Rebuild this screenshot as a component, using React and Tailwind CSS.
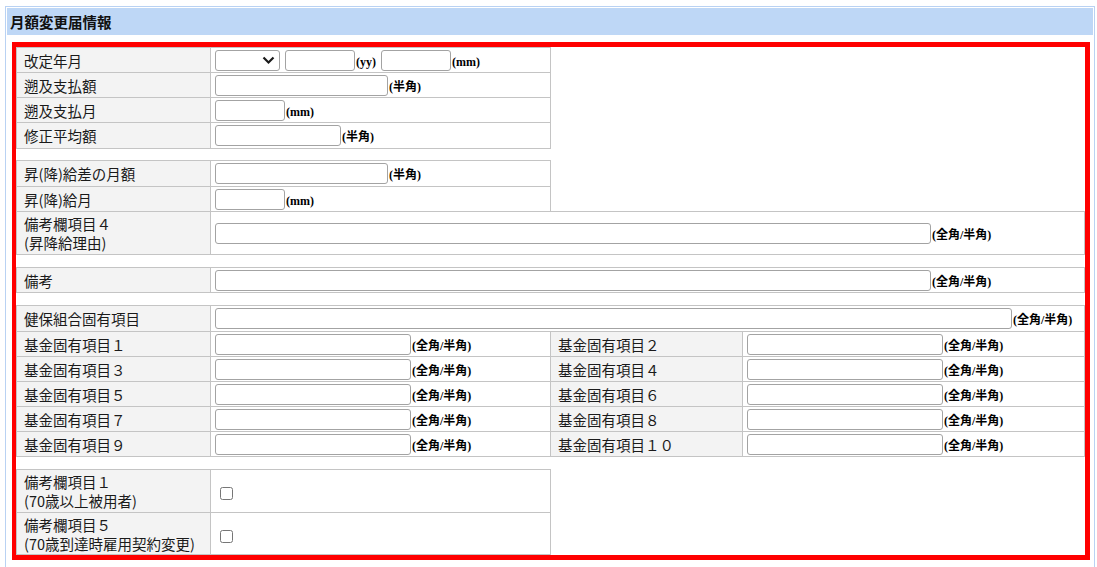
import React from 'react';

const lbl = "bg-[#f3f3f3] border border-[#c4c4c4] pl-[7px] pr-1 text-[14.5px] leading-[19px] text-[#1a1a1a] align-middle";
const val = "border border-[#c4c4c4] pl-[4px] align-middle";
const hintFont = "font-bold text-[12px] text-black font-['Liberation_Serif','Noto_Sans_CJK_JP',serif] mt-[3px] ml-px";

function Box({ w }) {
    return <input type="text" className={`h-[21px] ${w} border border-[#a3a3a3] rounded-[3px] bg-white shrink-0`} />;
}

function Field({ w, hint }) {
    return (
        <div className="flex items-center">
            <Box w={w} />
            {hint && <span className={hintFont}>{hint}</span>}
        </div>
    );
}

function Cols() {
    return (
        <colgroup>
            <col className="w-[194px]" />
            <col className="w-[340px]" />
            <col className="w-[192px]" />
            <col />
        </colgroup>
    );
}

export default function App() {
    const kikin = [
        ['基金固有項目１', '基金固有項目２'],
        ['基金固有項目３', '基金固有項目４'],
        ['基金固有項目５', '基金固有項目６'],
        ['基金固有項目７', '基金固有項目８'],
        ['基金固有項目９', '基金固有項目１０'],
    ];

    return (
        <div className="min-h-screen bg-white pt-[6px] pl-[5px] pr-[2px] font-['Noto_Sans_CJK_JP',sans-serif]">
            <div className="border border-b-0 border-[#b9d2f3] p-px pb-[10px] min-h-[561px]">
                <div className="h-[27px] bg-[#bed7f6] flex items-center pl-[3px]">
                    <h2 className="text-[14.5px] font-bold text-[#111]">月額変更届情報</h2>
                </div>

                <div className="mt-[7px] ml-[5px] w-[1078px] border-[5px] border-l-4 border-[#ff0000]">
                    <table className="w-full table-fixed">
                        <Cols />
                        <tbody>
                            <tr className="h-[25px]">
                                <td className={lbl}>改定年月</td>
                                <td className={val}>
                                    <div className="flex items-center">
                                        <div className="relative w-[65px] h-[21px] shrink-0">
                                            <select className="appearance-none w-full h-full border border-[#a3a3a3] rounded-[3px] bg-white">
                                                <option></option>
                                            </select>
                                            <svg className="absolute right-[5px] top-[6px] pointer-events-none" width="13" height="9" viewBox="0 0 13 9">
                                                <path d="M1.5 1.5 L6.5 6.5 L11.5 1.5" fill="none" stroke="#1a1a1a" strokeWidth="2.2" />
                                            </svg>
                                        </div>
                                        <div className="ml-[5px] flex items-center">
                                            <Box w="w-[70px]" />
                                            <span className={hintFont}>(yy)</span>
                                        </div>
                                        <div className="ml-[5px] flex items-center">
                                            <Box w="w-[70px]" />
                                            <span className={hintFont}>(mm)</span>
                                        </div>
                                    </div>
                                </td>
                            </tr>
                            <tr className="h-[25px]">
                                <td className={lbl}>遡及支払額</td>
                                <td className={val}><Field w="w-[173px]" hint="(半角)" /></td>
                            </tr>
                            <tr className="h-[25px]">
                                <td className={lbl}>遡及支払月</td>
                                <td className={val}><Field w="w-[70px]" hint="(mm)" /></td>
                            </tr>
                            <tr className="h-[26px]">
                                <td className={lbl}>修正平均額</td>
                                <td className={val}><Field w="w-[126px]" hint="(半角)" /></td>
                            </tr>
                        </tbody>
                    </table>

                    <table className="w-full table-fixed mt-[11px]">
                        <Cols />
                        <tbody>
                            <tr className="h-[26px]">
                                <td className={lbl}>昇(降)給差の月額</td>
                                <td className={val}><Field w="w-[173px]" hint="(半角)" /></td>
                            </tr>
                            <tr className="h-[25px]">
                                <td className={lbl}>昇(降)給月</td>
                                <td className={val}><Field w="w-[70px]" hint="(mm)" /></td>
                            </tr>
                            <tr className="h-[43px]">
                                <td className={lbl}>備考欄項目４<br />(昇降給理由)</td>
                                <td className={val} colSpan={3}><Field w="w-[716px]" hint="(全角/半角)" /></td>
                            </tr>
                        </tbody>
                    </table>

                    <table className="w-full table-fixed mt-[12px]">
                        <Cols />
                        <tbody>
                            <tr className="h-[25px]">
                                <td className={lbl}>備考</td>
                                <td className={val} colSpan={3}><Field w="w-[716px]" hint="(全角/半角)" /></td>
                            </tr>
                        </tbody>
                    </table>

                    <table className="w-full table-fixed mt-[12px]">
                        <Cols />
                        <tbody>
                            <tr className="h-[26px]">
                                <td className={lbl}>健保組合固有項目</td>
                                <td className={val} colSpan={3}><Field w="w-[797px]" hint="(全角/半角)" /></td>
                            </tr>
                            {kikin.map(([a, b]) => (
                                <tr key={a} className="h-[25px]">
                                    <td className={lbl}>{a}</td>
                                    <td className={val}><Field w="w-[196px]" hint="(全角/半角)" /></td>
                                    <td className={lbl}>{b}</td>
                                    <td className={val}><Field w="w-[196px]" hint="(全角/半角)" /></td>
                                </tr>
                            ))}
                        </tbody>
                    </table>

                    <table className="w-full table-fixed mt-[12px]">
                        <Cols />
                        <tbody>
                            <tr className="h-[43px]">
                                <td className={lbl}>備考欄項目１<br />(70歳以上被用者)</td>
                                <td className={val}>
                                    <input type="checkbox" className="ml-[5px] w-[13px] h-[13px] align-middle" />
                                </td>
                            </tr>
                            <tr className="h-[42px]">
                                <td className={lbl}>備考欄項目５<br />(70歳到達時雇用契約変更)</td>
                                <td className={val}>
                                    <input type="checkbox" className="ml-[5px] w-[13px] h-[13px] align-middle" />
                                </td>
                            </tr>
                        </tbody>
                    </table>
                </div>
            </div>
        </div>
    );
}
